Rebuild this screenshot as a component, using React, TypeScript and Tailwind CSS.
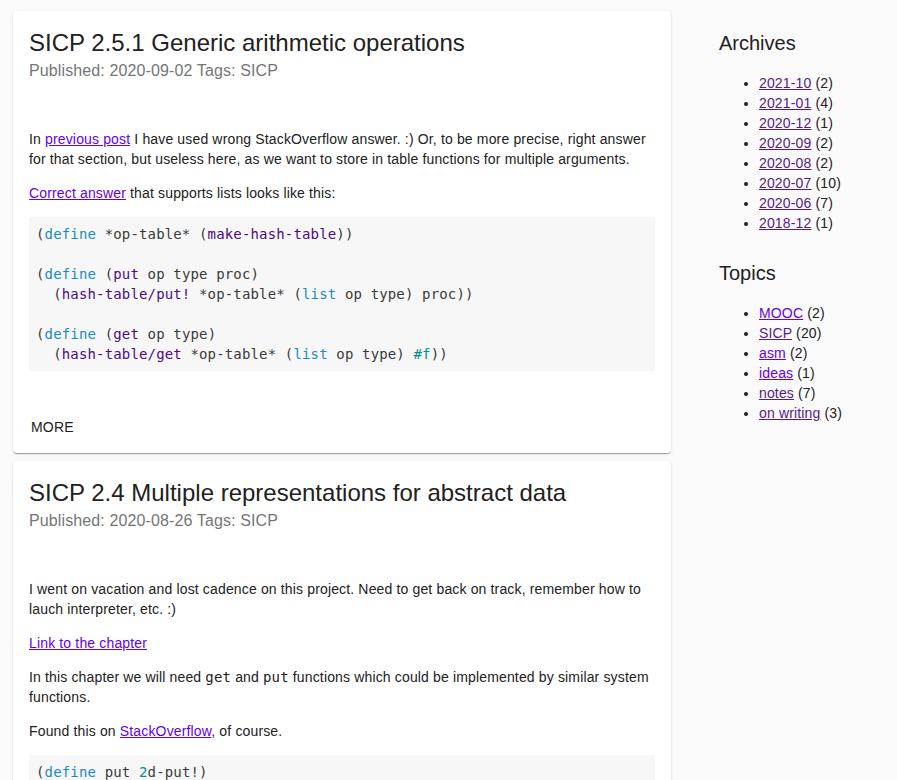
import React from "react";

const linkNew = "text-[#6200ee] underline";
const linkSeen = "text-[#551a8b] underline";

function Kw({ children }: { children: React.ReactNode }) {
  return <span className="text-[#1a8bc6]">{children}</span>;
}

function Fn({ children }: { children: React.ReactNode }) {
  return <span className="text-[#4b0a8a]">{children}</span>;
}

function Lit({ children }: { children: React.ReactNode }) {
  return <span className="text-[#00918f]">{children}</span>;
}

function Code({ children }: { children: React.ReactNode }) {
  return (
    <pre className="mt-[14px] bg-[#f7f7f7] p-[7px] font-['DejaVu_Sans_Mono',monospace] text-[14px] leading-[20px] text-[#3a3a3a] whitespace-pre overflow-hidden">
      {children}
    </pre>
  );
}

function Post({
  title,
  date,
  children,
}: {
  title: string;
  date: string;
  children: React.ReactNode;
}) {
  return (
    <article className="bg-white rounded-[4px] shadow-[0_2px_1px_-1px_rgba(0,0,0,0.2),0_1px_1px_0_rgba(0,0,0,0.14),0_1px_3px_0_rgba(0,0,0,0.12)]">
      <div className="px-4 pt-4">
        <h2 className="text-[24px] leading-[32px] text-[#212121]">{title}</h2>
        <div className="mt-[3px] text-[16px] leading-[18px] tracking-[0.12px] text-[#757575]">
          Published: {date} Tags: SICP
        </div>
        <div className="pt-[49px] text-[14px] leading-[20px] tracking-[0.15px] text-[#212121]">
          {children}
        </div>
      </div>
      <div className="px-2 pt-[38px] pb-2">
        <button className="h-9 px-[10px] text-[14px] uppercase text-[#212121] tracking-[0.2px]">
          More
        </button>
      </div>
    </article>
  );
}

const archives: [string, number, boolean][] = [
  ["2021-10", 2, true],
  ["2021-01", 4, true],
  ["2020-12", 1, true],
  ["2020-09", 2, true],
  ["2020-08", 2, true],
  ["2020-07", 10, true],
  ["2020-06", 7, true],
  ["2018-12", 1, true],
];

const topics: [string, number, boolean][] = [
  ["MOOC", 2, false],
  ["SICP", 20, true],
  ["asm", 2, false],
  ["ideas", 1, false],
  ["notes", 7, true],
  ["on writing", 3, true],
];

function SideList({ items }: { items: [string, number, boolean][] }) {
  return (
    <ul className="list-disc pl-10 text-[14px] leading-[20px] tracking-[0.15px] text-[#212121]">
      {items.map(([name, count, seen]) => (
        <li key={name}>
          <a href="#" className={seen ? linkSeen : linkNew}>
            {name}
          </a>{" "}
          ({count})
        </li>
      ))}
    </ul>
  );
}

export default function App() {
  return (
    <div className="min-h-screen bg-[#fafafa] font-['Liberation_Sans',Arial,sans-serif] flex items-start">
      <main className="ml-[13px] mt-[11px] w-[658px] flex flex-col gap-2">
        <Post title="SICP 2.5.1 Generic arithmetic operations" date="2020-09-02">
          <p>
            In{" "}
            <a href="#" className={linkNew}>
              previous post
            </a>{" "}
            I have used wrong StackOverflow answer. :) Or, to be more precise, right answer
            for that section, but useless here, as we want to store in table functions for
            multiple arguments.
          </p>
          <p className="mt-[14px]">
            <a href="#" className={linkNew}>
              Correct answer
            </a>{" "}
            that supports lists looks like this:
          </p>
          <Code>
            (<Kw>define</Kw> *op-table* (<Fn>make-hash-table</Fn>)){"\n"}
            {"\n"}
            (<Kw>define</Kw> (<Fn>put</Fn> op type proc){"\n"}
            {"  "}(<Fn>hash-table/put!</Fn> *op-table* (<Kw>list</Kw> op type) proc)){"\n"}
            {"\n"}
            (<Kw>define</Kw> (<Fn>get</Fn> op type){"\n"}
            {"  "}(<Fn>hash-table/get</Fn> *op-table* (<Kw>list</Kw> op type) <Lit>#f</Lit>))
          </Code>
        </Post>

        <Post title="SICP 2.4 Multiple representations for abstract data" date="2020-08-26">
          <p>
            I went on vacation and lost cadence on this project. Need to get back on track,
            remember how to lauch interpreter, etc. :)
          </p>
          <p className="mt-[14px]">
            <a href="#" className={linkNew}>
              Link to the chapter
            </a>
          </p>
          <p className="mt-[14px]">
            In this chapter we will need{" "}
            <code className="font-['DejaVu_Sans_Mono',monospace] text-[14px]">get</code> and{" "}
            <code className="font-['DejaVu_Sans_Mono',monospace] text-[14px]">put</code>{" "}
            functions which could be implemented by similar system functions.
          </p>
          <p className="mt-[14px]">
            Found this on{" "}
            <a href="#" className={linkNew}>
              StackOverflow
            </a>
            , of course.
          </p>
          <Code>
            (<Kw>define</Kw> put <Lit>2</Lit>d-put!){"\n"}
            (<Kw>define</Kw> get <Lit>2</Lit>d-get)
          </Code>
        </Post>
      </main>

      <aside className="ml-[48px] pt-[29px] w-[178px]">
        <h3 className="text-[20px] leading-[28px] text-[#212121]">Archives</h3>
        <div className="mt-4">
          <SideList items={archives} />
        </div>
        <h3 className="mt-[26px] text-[20px] leading-[28px] text-[#212121]">Topics</h3>
        <div className="mt-4">
          <SideList items={topics} />
        </div>
      </aside>
    </div>
  );
}
